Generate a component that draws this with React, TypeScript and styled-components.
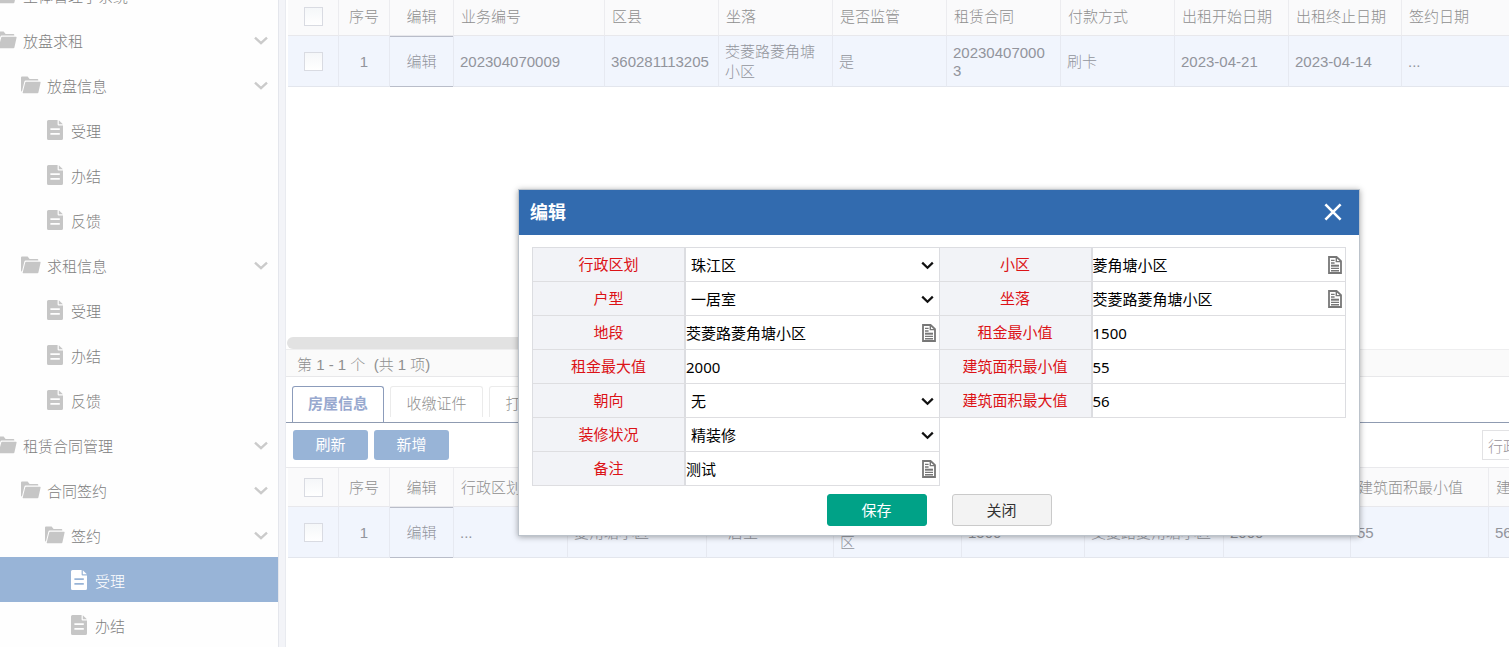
import React from "react";
import styled, { createGlobalStyle, css } from "styled-components";

const Global = createGlobalStyle`
  * { box-sizing: border-box; }
  body {
    margin: 0;
    background: #fff;
    color: #8f8f8f;
    font: 300 15px/20px "Liberation Sans", "Noto Sans CJK SC", sans-serif;
  }
  button, input, select { font: inherit; color: inherit; }
  button { cursor: pointer; }
`;

const Shell = styled.div`
  display: flex;
  height: 100vh;
  overflow: hidden;
  position: relative;
`;

/* ---------- Sidebar ---------- */

const Sidebar = styled.nav`
  flex: 0 0 278px;
  overflow: hidden;
  background: #fefefe;
`;

const Tree = styled.ul`
  list-style: none;
  margin: -28px 0 0 -3px;
  padding: 0;
`;

const TreeLink = styled.a<{ $level: number; $active?: boolean }>`
  display: flex;
  align-items: center;
  gap: 6px;
  height: 45px;
  padding-left: ${(p) => p.$level * 24}px;
  padding-right: 10px;
  text-decoration: none;
  color: ${(p) => (p.$active ? "#fff" : "#808080")};
  background: ${(p) => (p.$active ? "#98b4d7" : "transparent")};
`;

const TreeIcon = styled.span<{ $active?: boolean }>`
  display: flex;
  justify-content: center;
  width: 20px;
  color: ${(p) => (p.$active ? "#fff" : "#c6c6c6")};
`;

const TreeText = styled.span`
  flex: 1;
  white-space: nowrap;
  padding-top: 4px;
`;

const Splitter = styled.div`
  flex: 0 0 8px;
  background: #f3f4f8;
  border-left: 1px solid #e4e6ec;
  border-right: 1px solid #e9ebf0;
`;

const FolderIcon = () => (
  <svg width="20" height="18" viewBox="0 0 20 18" fill="currentColor" aria-hidden="true">
    <path d="M0 1.5Q0 .5 1 .5H6.6L8.6 3H16.4Q17.3 3 17.3 3.9V4.6H4.6Q3.7 4.6 3.4 5.5L.9 15.6Q0 15.6 0 14.6Z" />
    <path d="M5.2 5.7H19Q19.8 5.7 19.6 6.5L17.4 16.5Q17.2 17.3 16.4 17.3H2.2Q1.5 17.3 1.7 16.5L4.2 6.5Q4.4 5.7 5.2 5.7Z" />
  </svg>
);

const FileIcon = () => (
  <svg width="16" height="20" viewBox="0 0 16 20" aria-hidden="true">
    <path
      fill="currentColor"
      fillRule="evenodd"
      d="M1.5 0H10.6V4.4Q10.6 5.4 11.6 5.4H16V18.5Q16 20 14.5 20H1.5Q0 20 0 18.5V1.5Q0 0 1.5 0ZM3.4 8.2V9.9H12.8V8.2ZM3.4 13V14.7H12.8V13Z"
    />
    <path fill="currentColor" d="M11.8.2L15.9 4.3H11.8Z" />
  </svg>
);

const Chevron = () => (
  <svg width="14" height="10" viewBox="0 0 14 10" fill="none" stroke="#cbcbcb" strokeWidth="2.4" aria-hidden="true">
    <path d="M1 2.6L7 8.2L13 2.6" />
  </svg>
);

type Node = { text: string; level: number; leaf?: boolean; active?: boolean };

const nodes: Node[] = [
  { text: "主体管理子系统", level: 0 },
  { text: "放盘求租", level: 0 },
  { text: "放盘信息", level: 1 },
  { text: "受理", level: 2, leaf: true },
  { text: "办结", level: 2, leaf: true },
  { text: "反馈", level: 2, leaf: true },
  { text: "求租信息", level: 1 },
  { text: "受理", level: 2, leaf: true },
  { text: "办结", level: 2, leaf: true },
  { text: "反馈", level: 2, leaf: true },
  { text: "租赁合同管理", level: 0 },
  { text: "合同签约", level: 1 },
  { text: "签约", level: 2 },
  { text: "受理", level: 3, leaf: true, active: true },
  { text: "办结", level: 3, leaf: true },
];

/* ---------- Grids ---------- */

const Main = styled.main`
  flex: 1;
  min-width: 0;
  display: flex;
  flex-direction: column;
`;

const TopPane = styled.section`
  flex: 337 1 0;
  min-height: 0;
  overflow: hidden;
  padding-left: 2px;
`;

const BottomPane = styled.section`
  flex: 310 1 0;
  min-height: 0;
  overflow: hidden;
  display: flex;
  flex-direction: column;
`;

const Scrolled = styled.div`
  margin-top: -3px;
`;

const GridArea = styled.div`
  overflow: hidden;
  padding-left: 2px;
`;

const Grid = styled.table<{ $width: number }>`
  table-layout: fixed;
  border-collapse: separate;
  border-spacing: 0;
  width: ${(p) => p.$width}px;
  min-width: 100%;
  text-align: left;
`;

const HeadCell = styled.th<{ $center?: boolean }>`
  height: 39px;
  padding: 1px 7px 0;
  font-weight: 300;
  white-space: nowrap;
  text-align: ${(p) => (p.$center ? "center" : "left")};
  background: #fafafb;
  border-right: 1px solid #ececef;
  border-bottom: 1px solid #e8e8ec;
`;

const Cell = styled.td<{ $center?: boolean; $kind?: Kind }>`
  height: 51px;
  padding: ${(p) => (p.$kind === "action" ? "0" : "1px 6px 0 6px")};
  color: #92949c;
  background: #f1f5fd;
  border-right: 1px solid #e6e9f1;
  border-bottom: 1px solid #e3e6ed;
  text-align: ${(p) => (p.$center ? "center" : "left")};
  ${(p) => p.$kind === "nowrap" && css`white-space: nowrap;`}
  ${(p) => p.$kind === "code" && css`padding-right: 10px; line-height: 18px; word-break: break-all;`}
`;

const RowAction = styled.button`
  display: block;
  width: 100%;
  height: 51px;
  padding: 2px 0 0;
  border: 0;
  border-top: 1px solid #b9bdc9;
  border-bottom: 1px solid #b9bdc9;
  background: transparent;
  margin: -1px 0;
`;

const Tick = styled.input`
  appearance: none;
  display: block;
  width: 19px;
  height: 19px;
  margin: 0 auto;
  background: linear-gradient(#f5f7f9, #fff);
  border: 1px solid #d9dbe2;
`;

type Kind = "nowrap" | "code" | "action";
type Column = { title: string; width: number; value: string; kind?: Kind };

const contractColumns: Column[] = [
  { title: "业务编号", width: 151, value: "202304070009" },
  { title: "区县", width: 114, value: "360281113205", kind: "nowrap" },
  { title: "坐落", width: 114, value: "茭菱路菱角塘小区" },
  { title: "是否监管", width: 114, value: "是" },
  { title: "租赁合同", width: 114, value: "202304070003", kind: "code" },
  { title: "付款方式", width: 114, value: "刷卡" },
  { title: "出租开始日期", width: 114, value: "2023-04-21" },
  { title: "出租终止日期", width: 113, value: "2023-04-14" },
  { title: "签约日期", width: 120, value: "..." },
];

const houseColumns: Column[] = [
  { title: "行政区划", width: 114, value: "..." },
  { title: "小区", width: 139, value: "菱角塘小区" },
  { title: "户型", width: 127, value: "一居室" },
  { title: "坐落", width: 128, value: "茭菱路菱角塘小区" },
  { title: "租金最小值", width: 123, value: "1500" },
  { title: "地段", width: 139, value: "茭菱路菱角塘小区" },
  { title: "租金最大值", width: 127, value: "2000" },
  { title: "建筑面积最小值", width: 138, value: "55" },
  { title: "建筑面积最大值", width: 138, value: "56" },
];

const DataGrid = ({ columns }: { columns: Column[] }) => (
  <Grid $width={columns.reduce((sum, c) => sum + c.width, 166)}>
    <colgroup>
      <col width={51} />
      <col width={51} />
      <col width={64} />
      {columns.map((c) => (
        <col key={c.title} width={c.width} />
      ))}
    </colgroup>
    <thead>
      <tr>
        <HeadCell $center>
          <Tick type="checkbox" aria-label="全选" />
        </HeadCell>
        <HeadCell $center>序号</HeadCell>
        <HeadCell $center>编辑</HeadCell>
        {columns.map((c) => (
          <HeadCell key={c.title}>{c.title}</HeadCell>
        ))}
      </tr>
    </thead>
    <tbody>
      <tr>
        <Cell $center>
          <Tick type="checkbox" aria-label="选择第 1 行" />
        </Cell>
        <Cell $center>1</Cell>
        <Cell $center $kind="action">
          <RowAction type="button">编辑</RowAction>
        </Cell>
        {columns.map((c) => (
          <Cell key={c.title} $kind={c.kind}>
            {c.value}
          </Cell>
        ))}
      </tr>
    </tbody>
  </Grid>
);

const ScrollThumb = styled.div`
  flex: 0 0 12px;
  width: 60%;
  margin-left: 1px;
  border-radius: 6px;
  background: #e2e2e2;
`;

const Pager = styled.div`
  flex: 0 0 28px;
  padding: 5px 11px 0;
  border-top: 1px solid #eeeeef;
  border-bottom: 1px solid #e8e8ea;
  background: #fafafa;
  white-space: pre;
`;

const Tabs = styled.div`
  flex: 0 0 45px;
  display: flex;
  align-items: flex-start;
  gap: 6px;
  padding: 9px 6px 0;
  border-bottom: 1px solid #8f9bb1;
`;

const Tab = styled.button<{ $active?: boolean }>`
  flex: none;
  width: ${(p) => (p.$active ? 92 : 93)}px;
  height: ${(p) => (p.$active ? 36 : 31)}px;
  padding: ${(p) => (p.$active ? "0 0 1px" : "4px 0 0")};
  white-space: nowrap;
  background: #fff;
  border: 1px solid ${(p) => (p.$active ? "#8c9cbb" : "#ebebeb")};
  border-bottom: 0;
  border-radius: 3px 3px 0 0;
  color: ${(p) => (p.$active ? "#98a9cf" : "#8f8f8f")};
  font-weight: ${(p) => (p.$active ? 700 : 300)};
`;

const Toolbar = styled.div`
  flex: 0 0 44px;
  display: flex;
  align-items: flex-start;
  gap: 6px;
  padding: 7px 7px 0;
  overflow: hidden;
`;

const ToolButton = styled.button`
  width: 75px;
  height: 30px;
  padding: 0;
  border: 0;
  border-radius: 3px;
  background: #98b4d7;
  color: #fff;
  font-weight: 400;
`;

const Filter = styled.input`
  width: 120px;
  height: 30px;
  margin-left: auto;
  margin-right: -100px;
  flex: none;
  padding: 2px 5px 0;
  border: 1px solid #e2e2e4;
  background: #fff;
  &::placeholder { color: #98939a; opacity: 1; }
`;

const Divider = styled.div`
  flex: 0 0 1px;
  background: #e9e9ec;
`;

/* ---------- Dialog ---------- */

const Dialog = styled.section`
  position: absolute;
  left: 518px;
  top: 189px;
  width: 842px;
  background: #fff;
  border: 1px solid #bcc3cb;
  box-shadow: 0 1px 6px rgba(0, 0, 0, 0.35);
  color: #000;
  font-family: "Noto Sans", "Noto Sans CJK SC", sans-serif;
  font-weight: 400;
`;

const DialogHead = styled.header`
  display: flex;
  align-items: center;
  justify-content: space-between;
  height: 45px;
  padding: 0 16px 2px 11px;
  background: #326baf;
  color: #fff;
`;

const DialogTitle = styled.h2`
  margin: 0;
  font-size: 18px;
  line-height: 24px;
  font-weight: 700;
`;

const CloseIconButton = styled.button`
  display: flex;
  padding: 0;
  border: 0;
  background: none;
`;

const Form = styled.form`
  padding: 12px 13px 9px;
`;

const Columns = styled.div`
  display: flex;
  align-items: flex-start;
`;

const FieldColumn = styled.div`
  flex: 1;
  border: 1px solid #dcdde1;
  border-bottom: 0;
  & + & { margin-left: -1px; }
`;

const FieldRow = styled.div`
  display: flex;
  height: 34px;
  border-bottom: 1px solid #dedee1;
`;

const FieldLabel = styled.label`
  flex: 0 0 153px;
  display: flex;
  align-items: center;
  justify-content: center;
  padding-bottom: 2px;
  background: #f2f3f7;
  border-right: 2px solid #dcdde1;
  color: #dc1216;
`;

const FieldBody = styled.div`
  flex: 1;
  min-width: 0;
  display: flex;
  align-items: center;
  padding-right: 3px;
  position: relative;
`;

const TextInput = styled.input`
  flex: 1;
  min-width: 0;
  height: 30px;
  padding: 0;
  border: 0;
  outline: 0;
  background: transparent;
`;

const Select = styled.select`
  appearance: none;
  flex: 1;
  height: 30px;
  padding: 0 20px 0 5px;
  border: 0;
  background: transparent;
`;

const SelectArrow = styled.svg`
  position: absolute;
  right: 5px;
  top: 13px;
  pointer-events: none;
`;

const NoteButton = styled.button`
  display: flex;
  padding: 0;
  border: 0;
  background: none;
`;

const Actions = styled.div`
  display: flex;
  justify-content: center;
  gap: 25px;
  padding-top: 8px;
`;

const ActionButton = styled.button<{ $primary?: boolean }>`
  width: 100px;
  height: 32px;
  padding: 0;
  border: 1px solid ${(p) => (p.$primary ? "#00a287" : "#cacaca")};
  border-radius: 3px;
  background: ${(p) => (p.$primary ? "#00a287" : "#f3f3f3")};
  color: ${(p) => (p.$primary ? "#fff" : "#333")};
`;

const NoteIcon = () => (
  <svg width="14" height="18" viewBox="0 0 14 18" fill="none" stroke="#777" aria-hidden="true">
    <path strokeWidth="1.8" d="M1 1H8.6L13 5.2V17H1Z" />
    <path strokeWidth="1.4" d="M8.3 1V5.6H13M3 4.4H6.6M3 7H6.6M3 12.4H11M3 14.8H11" />
    <path strokeWidth="2" d="M3 9.7H11" />
  </svg>
);

type FieldSpec = { id: string; label: string; value: string; type?: "select" | "note" };

const leftFields: FieldSpec[] = [
  { id: "district", label: "行政区划", value: "珠江区", type: "select" },
  { id: "layout", label: "户型", value: "一居室", type: "select" },
  { id: "section", label: "地段", value: "茭菱路菱角塘小区", type: "note" },
  { id: "rentMax", label: "租金最大值", value: "2000" },
  { id: "facing", label: "朝向", value: "无", type: "select" },
  { id: "decoration", label: "装修状况", value: "精装修", type: "select" },
  { id: "remark", label: "备注", value: "测试", type: "note" },
];

const rightFields: FieldSpec[] = [
  { id: "estate", label: "小区", value: "菱角塘小区", type: "note" },
  { id: "address", label: "坐落", value: "茭菱路菱角塘小区", type: "note" },
  { id: "rentMin", label: "租金最小值", value: "1500" },
  { id: "areaMin", label: "建筑面积最小值", value: "55" },
  { id: "areaMax", label: "建筑面积最大值", value: "56" },
];

const Field = ({ id, label, value, type }: FieldSpec) => (
  <FieldRow>
    <FieldLabel htmlFor={id}>{label}</FieldLabel>
    <FieldBody>
      {type === "select" ? (
        <>
          <Select id={id} defaultValue={value}>
            <option>{value}</option>
          </Select>
          <SelectArrow width="13" height="9" viewBox="0 0 13 9" fill="none" stroke="#111" strokeWidth="2.2" aria-hidden="true">
            <path d="M1.2 1.6L6.5 6.8L11.8 1.6" />
          </SelectArrow>
        </>
      ) : (
        <TextInput id={id} defaultValue={value} />
      )}
      {type === "note" && (
        <NoteButton type="button" aria-label={label}>
          <NoteIcon />
        </NoteButton>
      )}
    </FieldBody>
  </FieldRow>
);

export default function App() {
  return (
    <>
      <Global />
      <Shell>
        <Sidebar>
          <Tree>
            {nodes.map((n, i) => (
              <li key={i}>
                <TreeLink href="#" $level={n.level} $active={n.active}>
                  <TreeIcon $active={n.active}>{n.leaf ? <FileIcon /> : <FolderIcon />}</TreeIcon>
                  <TreeText>{n.text}</TreeText>
                  {!n.leaf && <Chevron />}
                </TreeLink>
              </li>
            ))}
          </Tree>
        </Sidebar>
        <Splitter />
        <Main>
          <TopPane>
            <Scrolled>
              <DataGrid columns={contractColumns} />
            </Scrolled>
          </TopPane>
          <BottomPane>
            <ScrollThumb />
            <Pager>第 1 - 1 个  (共 1 项)</Pager>
            <Tabs>
              <Tab type="button" $active>
                房屋信息
              </Tab>
              <Tab type="button">收缴证件</Tab>
              <Tab type="button">打印证件</Tab>
            </Tabs>
            <Toolbar>
              <ToolButton type="button">刷新</ToolButton>
              <ToolButton type="button">新增</ToolButton>
              <Filter placeholder="行政区划" aria-label="行政区划" />
            </Toolbar>
            <Divider />
            <GridArea>
              <DataGrid columns={houseColumns} />
            </GridArea>
          </BottomPane>
        </Main>
        <Dialog role="dialog" aria-label="编辑">
          <DialogHead>
            <DialogTitle>编辑</DialogTitle>
            <CloseIconButton type="button" aria-label="关闭">
              <svg width="20" height="20" viewBox="0 0 20 20" fill="none" stroke="#fff" strokeWidth="2.6" aria-hidden="true">
                <path d="M2.4 2.4L17.6 17.6M17.6 2.4L2.4 17.6" />
              </svg>
            </CloseIconButton>
          </DialogHead>
          <Form onSubmit={(e: React.FormEvent) => e.preventDefault()}>
            <Columns>
              <FieldColumn>
                {leftFields.map((f) => (
                  <Field key={f.id} {...f} />
                ))}
              </FieldColumn>
              <FieldColumn>
                {rightFields.map((f) => (
                  <Field key={f.id} {...f} />
                ))}
              </FieldColumn>
            </Columns>
            <Actions>
              <ActionButton type="submit" $primary>
                保存
              </ActionButton>
              <ActionButton type="button">关闭</ActionButton>
            </Actions>
          </Form>
        </Dialog>
      </Shell>
    </>
  );
}
